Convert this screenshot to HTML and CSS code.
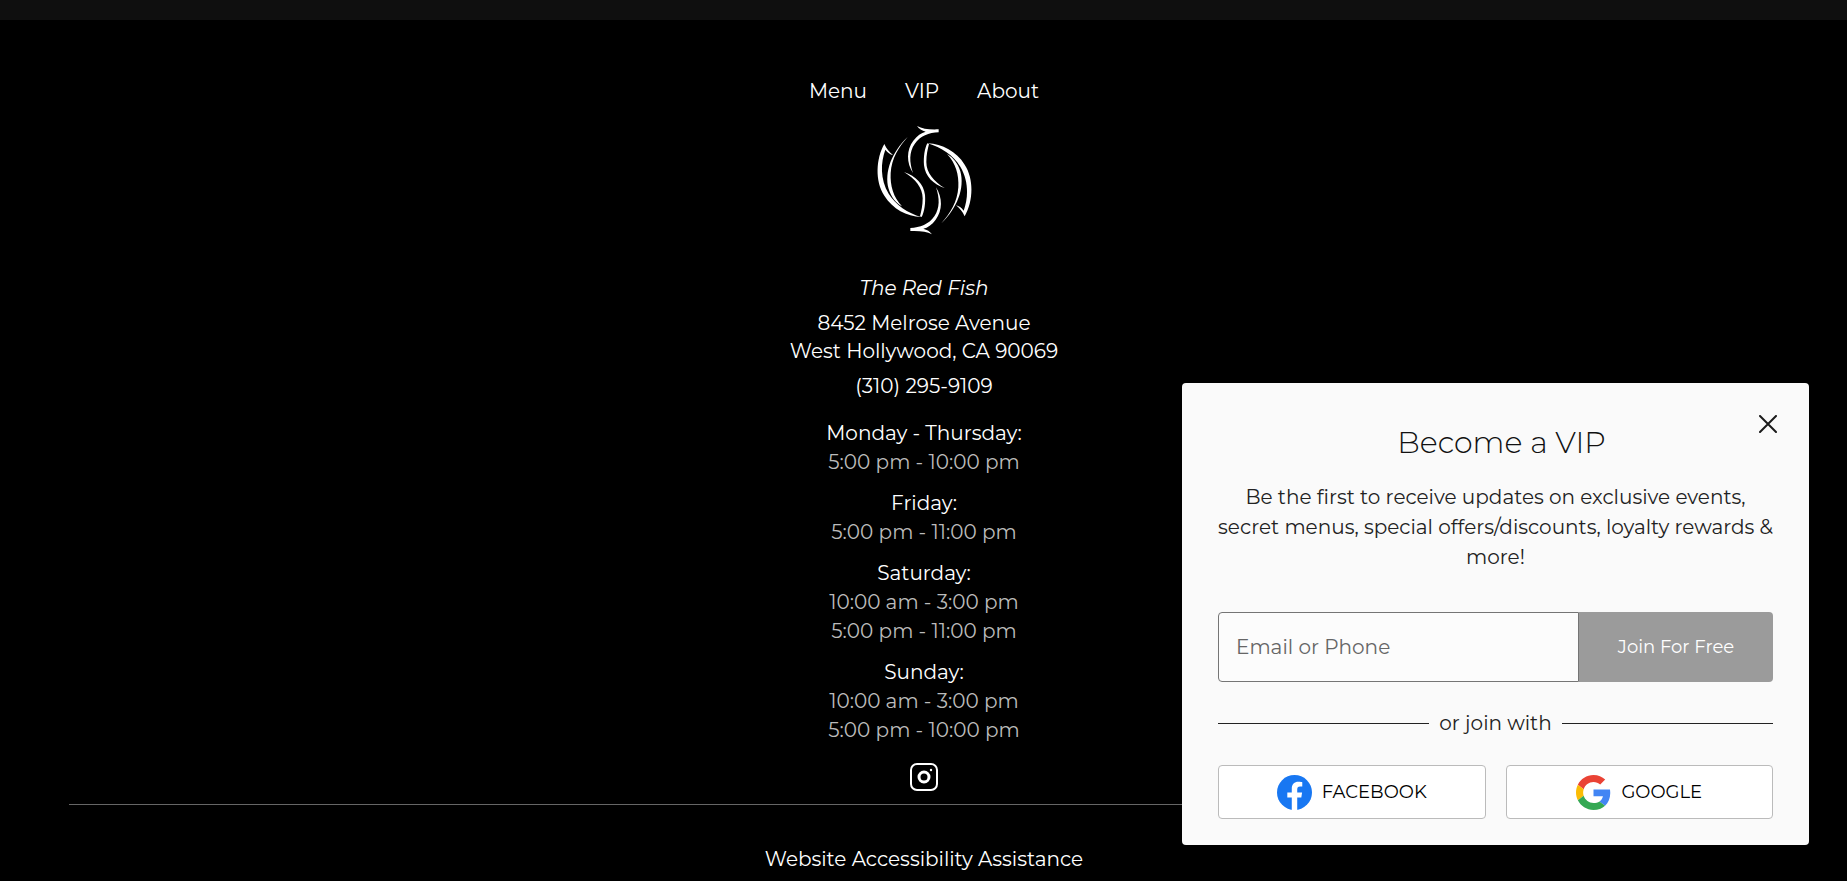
FILE: index.html
```html
<!DOCTYPE html>
<html lang="en">
<head>
<meta charset="utf-8">
<title>The Red Fish</title>
<link rel="stylesheet" href="styles.css">
</head>
<body>
<div class="page-edge"></div>
<footer class="footer">
  <nav class="nav" aria-label="Footer">
    <a href="#menu">Menu</a>
    <a href="#vip">VIP</a>
    <a href="#about">About</a>
  </nav>
  <svg class="logo" viewBox="42 27 300 339" role="img" aria-label="The Red Fish">
    <defs>
      <g id="fish">
        <path d="M73 87C48 130 44 198 73 242C98 282 140 304 184 306C143 294 107 270 86 236C60 192 62 142 76 104C83 113 90 118 99 120C88 112 80 102 73 87Z"/>
        <path d="M143 66C96 110 72 171 86 222C94 247 107 263 126 274C100 247 90 212 92 174C95 131 115 97 143 66Z"/>
        <path d="M132 171C166 192 188 218 188 250C188 272 184 288 180 304L185 306C193 290 197 266 195 240C191 207 168 183 132 171Z"/>
        <path d="M159 174C139 143 139 104 160 77C171 62 184 53 197 50C186 47 177 42 171 33C187 42 208 44 236 43V52C207 53 180 63 164 87C147 111 148 142 159 174Z"/>
      </g>
    </defs>
    <use href="#fish"/>
    <use href="#fish" transform="rotate(180 193.500 195.500)"/>
  </svg>
  <address class="address">
    <em>The Red Fish</em>
    <a href="#map">8452 Melrose Avenue<br>West Hollywood, CA 90069</a>
    <a href="tel:3102959109">(310) 295-9109</a>
  </address>
  <dl class="hours">
    <div><dt>Monday - Thursday:</dt><dd>5:00 pm - 10:00 pm</dd></div>
    <div><dt>Friday:</dt><dd>5:00 pm - 11:00 pm</dd></div>
    <div><dt>Saturday:</dt><dd>10:00 am - 3:00 pm</dd><dd>5:00 pm - 11:00 pm</dd></div>
    <div><dt>Sunday:</dt><dd>10:00 am - 3:00 pm</dd><dd>5:00 pm - 10:00 pm</dd></div>
  </dl>
  <a class="social" href="#instagram" aria-label="Instagram">
    <svg viewBox="0 0 28 28"><rect x="1" y="1" width="26" height="26" rx="6"/><circle cx="14" cy="14" r="5"/><circle class="dot" cx="21" cy="7" r="1.200"/></svg>
  </a>
  <hr class="rule">
  <a href="#accessibility">Website Accessibility Assistance</a>
</footer>

<section class="vip" role="dialog" aria-labelledby="vip-title">
  <button class="close" type="button" aria-label="Close"><svg viewBox="0 0 18 18"><path d="M1 1L17 17M17 1L1 17"/></svg></button>
  <h2 class="title" id="vip-title">Become a VIP</h2>
  <p class="lead">Be the first to receive updates on exclusive events,<br>secret menus, special offers/discounts, loyalty rewards &amp;<br>more!</p>
  <form class="join">
    <input type="text" placeholder="Email or Phone" aria-label="Email or Phone">
    <button type="button">Join For Free</button>
  </form>
  <div class="divider"><span>or join with</span></div>
  <div class="providers">
    <button type="button">
      <svg viewBox="0 0 36 36"><circle cx="18" cy="18" r="18" fill="#1877f2"/><path fill="#fff" d="M15.200 36V23.200H10.600V18H15.200V14C15.200 9.500 17.900 7 22 7C24 7 26 7.350 26 7.350V11.800H23.700C21.500 11.800 20.800 13.200 20.800 14.600V18H25.800L25 23.200H20.800V36Z"/></svg>
      FACEBOOK
    </button>
    <button type="button">
      <svg viewBox="0 0 48 48"><path fill="#ea4335" d="M24 9.500c3.540 0 6.710 1.220 9.210 3.600l6.850-6.850C35.900 2.380 30.470 0 24 0 14.620 0 6.510 5.380 2.560 13.220l7.980 6.190C12.430 13.720 17.740 9.500 24 9.500z"/><path fill="#4285f4" d="M46.980 24.550c0-1.570-.15-3.090-.38-4.550H24v9.020h12.940c-.58 2.960-2.260 5.480-4.780 7.180l7.730 6c4.510-4.180 7.090-10.360 7.090-17.650z"/><path fill="#fbbc05" d="M10.530 28.590c-.48-1.450-.76-2.990-.76-4.590s.27-3.140.76-4.590l-7.980-6.190C.92 16.460 0 20.120 0 24c0 3.880.92 7.540 2.560 10.780l7.970-6.190z"/><path fill="#34a853" d="M24 48c6.480 0 11.930-2.130 15.890-5.810l-7.730-6c-2.150 1.450-4.920 2.300-8.160 2.300-6.260 0-11.570-4.220-13.470-9.910l-7.980 6.190C6.510 42.620 14.620 48 24 48z"/></svg>
      GOOGLE
    </button>
  </div>
</section>
</body>
</html>
```
FILE: styles.css
```css
* { box-sizing: border-box; }

body {
  margin: 0;
  background: #000;
  color: #fff;
  font: 400 20px/28px Montserrat, Inter, "Liberation Sans", sans-serif;
}

a { color: inherit; text-decoration: none; }

svg { display: block; }

button, input { font: inherit; }

button { cursor: pointer; }

.page-edge { height: 20px; background: #0f0f0f; }

.footer {
  display: flex;
  flex-direction: column;
  align-items: center;
  padding: 57px 68px 7px 69px;
  text-align: center;
}

.nav { display: flex; gap: 38px; }

.logo { width: 100px; margin: 19px 0 37px; fill: #fff; }

.address {
  display: flex;
  flex-direction: column;
  gap: 7px;
  font-style: normal;
}

.hours {
  display: flex;
  flex-direction: column;
  gap: 12px;
  margin: 19px 0 18px;
  line-height: 29px;
}

.hours dd { margin: 0; color: #bbb; }

.social svg {
  width: 28px;
  fill: none;
  stroke: #fff;
  stroke-width: 2;
}

.social circle { stroke-width: 3; }

.social .dot { fill: #fff; stroke: none; }

.rule {
  width: 100%;
  margin: 13px 0 40px;
  border: 0;
  border-top: 1px solid #666;
}

.vip {
  position: fixed;
  right: 38px;
  bottom: 36px;
  width: 627px;
  padding: 40px 36px 26px;
  border-radius: 4px;
  background: #fafafa;
  color: #222;
  text-align: center;
}

.close {
  position: absolute;
  top: 24px;
  right: 24px;
  padding: 8px;
  border: 0;
  background: none;
}

.close svg {
  width: 18px;
  fill: none;
  stroke: #1a1a1a;
  stroke-width: 2;
  stroke-linecap: round;
}

.title {
  margin: 0 0 19px;
  padding-left: 12px;
  font-size: 30px;
  font-weight: 300;
  line-height: 40px;
  color: #111;
}

.lead { margin: 0; line-height: 30px; white-space: nowrap; }

.join { display: flex; height: 70px; margin: 40px 0 27px; }

.join input {
  flex: 1;
  min-width: 0;
  padding: 0 17px;
  border: 1px solid #757575;
  border-radius: 4px 0 0 4px;
  background: #fcfcfc;
  color: #222;
}

.join input::placeholder { color: #666; opacity: 1; }

.join button {
  width: 194px;
  border: 0;
  border-radius: 0 4px 4px 0;
  background: #9b9b9b;
  color: #fff;
  font-size: 18px;
}

.divider { display: flex; align-items: center; gap: 10px; }

.divider::before, .divider::after {
  content: "";
  flex: 1;
  border-top: 1px solid #222;
}

.providers {
  display: grid;
  grid-template-columns: 1fr 1fr;
  gap: 20px;
  margin-top: 28px;
}

.providers button {
  display: flex;
  align-items: center;
  justify-content: center;
  gap: 10px;
  height: 54px;
  border: 1px solid #bbb;
  border-radius: 4px;
  background: #fff;
  color: #000;
  font-size: 18px;
}

.providers svg { width: 35px; }
```
